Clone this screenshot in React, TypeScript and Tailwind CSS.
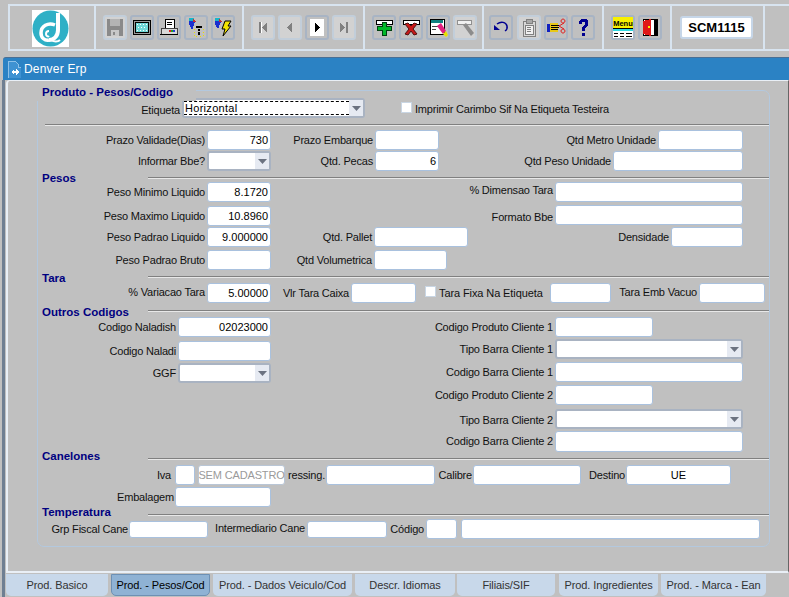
import React from "react";

const FONT = "font-['Liberation_Sans',Arial,sans-serif]";

function Box({ className = "", value, right = true }: { className?: string; value?: string; right?: boolean }) {
  return (
    <div
      className={`flex items-center shrink-0 bg-white border border-[#a9c1de] rounded-[3px] pl-[2px] pr-[2px] text-black ${right ? "justify-end" : "justify-center"} ${className}`}
    >
      {value}
    </div>
  );
}

function SelectBox({ className = "", value }: { className?: string; value?: string }) {
  return (
    <div className={`flex shrink-0 bg-white border-2 border-[#a9b3c2] rounded-[3px] overflow-hidden ${className}`}>
      <span className="flex-1 flex items-center text-black">
        {value && (
          <span className="flex items-center w-full h-[14px] pl-[1px] border-y border-dashed border-black tracking-[0.3px]">{value}</span>
        )}
      </span>
      <span className="flex items-center justify-center w-[14px] bg-[#e6eaf2]">
        <svg width="9" height="5" viewBox="0 0 9 5">
          <path d="M0 0h9L4.5 5z" fill="#6b7280" />
        </svg>
      </span>
    </div>
  );
}

function Label({ className = "", children }: { className?: string; children: React.ReactNode }) {
  return (
    <span className={`flex items-center justify-end shrink-0 pr-[2px] whitespace-nowrap text-[#111] tracking-[-0.2px] ${className}`}>
      {children}
    </span>
  );
}

function Section({ title, className, headClass, lineClass }: { title: string; className: string; headClass: string; lineClass: string }) {
  return (
    <div className={`flex ${className}`}>
      <span className={`w-[110px] shrink-0 pl-[4px] font-bold text-[11.5px] leading-[14px] text-[#000080] whitespace-nowrap ${headClass}`}>
        {title}
      </span>
      <Rule className={`flex-1 ${lineClass}`} />
    </div>
  );
}

function Rule({ className = "" }: { className?: string }) {
  return <div className={`h-[2px] border-t border-[#808080] bg-[#e8e8e8] ${className}`} />;
}

function ToolBtn({ off, children }: { off?: boolean; children: React.ReactNode }) {
  return (
    <div
      className={`flex items-center justify-center w-[24px] h-[25px] rounded-[3px] border-2 ${off ? "border-[#c2ceda] bg-[#d2d2d2]" : "border-[#a8b4c4]"}`}
    >
      <svg width="20" height="21" viewBox="0 0 20 21" shapeRendering="crispEdges">
        {children}
      </svg>
    </div>
  );
}

function Group({ className, children }: { className: string; children?: React.ReactNode }) {
  return <div className={`flex shrink-0 gap-[3px] pt-[9px] border-r-2 border-[#d8e4f0] ${className}`}>{children}</div>;
}

const tabs = [
  { name: "Prod. Basico", cls: "w-[102px] ml-0 bg-[#c8d8ea]" },
  { name: "Prod. - Pesos/Cod", cls: "w-[99px] ml-[3px] bg-[#8fb2d4] border border-[#6d90b4] !text-black" },
  { name: "Prod. - Dados Veiculo/Cod", cls: "w-[139px] ml-[3px] bg-[#c8d8ea]" },
  { name: "Descr. Idiomas", cls: "w-[100px] ml-[3px] bg-[#c8d8ea]" },
  { name: "Filiais/SIF", cls: "w-[98px] ml-[2px] bg-[#c8d8ea]" },
  { name: "Prod. Ingredientes", cls: "w-[99px] ml-[4px] bg-[#c8d8ea]" },
  { name: "Prod. - Marca - Ean", cls: "w-[105px] ml-[3px] bg-[#c8d8ea]" },
];

export default function App() {
  return (
    <div className={`relative flex flex-col w-[789px] h-[597px] overflow-hidden bg-[#c0c0c0] text-[11px] ${FONT}`}>
      {/* toolbar */}
      <div className="flex h-[47px] mt-[4px] ml-[8px] shrink-0 border-2 border-r-0 border-[#d8e4f0]">
        <Group className="w-[86px] pl-[22px] !pt-[4px]">
          <svg width="37" height="37" viewBox="0 0 37 37">
            <rect width="37" height="37" fill="#fff" />
            <circle cx="18.5" cy="18.5" r="18" fill="#2fb0c6" />
            <path d="M26 3v17c0 6-4 10-9 10" fill="none" stroke="#fff" strokeWidth="4" />
            <path d="M23 15c-7-3-14 1-14 8 0 5 4 8 8 7" fill="none" stroke="#fff" strokeWidth="3.5" />
            <path d="M17 21c-2 0-3 1-3 3s2 3 3 2" fill="none" stroke="#fff" strokeWidth="2" />
            <path d="M19 30c3 2 7 2 9 0" fill="none" stroke="#fff" strokeWidth="2" />
          </svg>
        </Group>
        <Group className="w-[148px] pl-[7px]">
          <ToolBtn off>
            <path d="M2 2h16v17H2z" fill="#8a8a8a" />
            <path d="M5 2h10v7H5z" fill="#b4b4b4" />
            <path d="M6 13h8v6H6z" fill="#c8c8c8" />
            <path d="M8 15h2v3H8z" fill="#8a8a8a" />
          </ToolBtn>
          <ToolBtn>
            <path d="M1 3h18v15H1z" fill="#000" />
            <path d="M2 4h16v13H2z" fill="#999" />
            <path d="M3 5h14v11H3z" fill="#000" />
            <path d="M4 6h12v9H4z" fill="#6fd6d6" />
            <path d="M5 7h1v1H5zM8 7h1v1H8zM11 7h1v1h-1zM14 7h1v1h-1zM6 10h1v1H6zM9 10h1v1H9zM12 10h1v1h-1zM5 13h1v1H5zM8 13h1v1H8zM11 13h1v1h-1zM14 13h1v1h-1z" fill="#fff" />
          </ToolBtn>
          <ToolBtn>
            <path d="M6 2h9v9H6z" fill="#fff" stroke="#000" strokeWidth="1" />
            <path d="M8 5h5v1H8zM8 7h5v1H8z" fill="#000" />
            <path d="M2 11h16v6H2z" fill="#d8d8d8" stroke="#444" strokeWidth="1" />
            <path d="M10 13h2v2h-2z" fill="#e02020" />
            <path d="M12 13h2v2h-2z" fill="#20a020" />
            <path d="M14 13h2v2h-2z" fill="#2040e0" />
            <path d="M1 17h18v1H1z" fill="#000" />
          </ToolBtn>
          <ToolBtn>
            <path d="M3 3l6 2-3 8-3-6z" fill="#1a2fd0" />
            <path d="M3 1h5v3H3z" fill="#19b4c8" />
            <path d="M7 2l3 3H7z" fill="#c03030" />
            <path d="M10 9h6v2h-2v3h-2v-2h2v-1h-4zM12 15h2v3h-2z" fill="#000" />
            <path d="M8 12h1v1H8zM8 15h1v1H8zM8 18h1v1H8zM17 12h1v1h-1zM17 15h1v1h-1zM17 18h1v1h-1zM10 19h1v1h-1zM14 19h1v1h-1z" fill="#e8e000" />
          </ToolBtn>
          <ToolBtn>
            <path d="M2 3l6 2-3 7-3-5z" fill="#1a2fd0" />
            <path d="M2 1h5v3H2z" fill="#19b4c8" />
            <path d="M6 2l3 3H6z" fill="#c03030" />
            <path d="M12 4h6l-3 5h3l-8 10 2-7H9z" fill="#f4e400" stroke="#000" strokeWidth="1" shapeRendering="auto" />
          </ToolBtn>
        </Group>
        <Group className="w-[121px] pl-[7px]">
          <ToolBtn off>
            <path d="M6 5h2v11H6z" fill="#808080" />
            <path d="M14 5v11l-5-5.500z" fill="#808080" />
            <path d="M8 5h1v11H8z" fill="#fff" />
          </ToolBtn>
          <ToolBtn off>
            <path d="M12 5v11l-5-5.500z" fill="#808080" />
          </ToolBtn>
          <ToolBtn>
            <path d="M3 2h14v17H3z" fill="#fff" />
            <path d="M8 5v11l5-5.500z" fill="#000" />
          </ToolBtn>
          <ToolBtn off>
            <path d="M6 5v11l5-5.500z" fill="#808080" />
            <path d="M12 5h2v11h-2z" fill="#808080" />
          </ToolBtn>
        </Group>
        <Group className="w-[119px] pl-[7px]">
          <ToolBtn>
            <path d="M2 3h16v4H2z" fill="#fff" stroke="#000" strokeWidth="1" />
            <path d="M8 5h4v4h5v4h-5v5H8v-5H3V9h5z" fill="#00b828" stroke="#004010" strokeWidth="1" />
          </ToolBtn>
          <ToolBtn>
            <path d="M2 3h16v4H2z" fill="#fff" stroke="#000" strokeWidth="1" />
            <path d="M4 7l3-1 3 3 3-3 3 1-4 5 4 5-3 1-3-4-3 4-3-1 4-5z" fill="#c81818" stroke="#501010" strokeWidth="1" shapeRendering="auto" />
          </ToolBtn>
          <ToolBtn>
            <path d="M2 2h14v15H2z" fill="#fff" stroke="#000" strokeWidth="1" />
            <path d="M3 3h12v3H3z" fill="#108080" />
            <path d="M4 9h6v1H4zM4 12h4v1H4z" fill="#444" />
            <path d="M9 9l4-3 5 8-3 3z" fill="#e02080" shapeRendering="auto" />
            <path d="M15 17l3-3 2 4-2 2z" fill="#e8e000" shapeRendering="auto" />
          </ToolBtn>
          <ToolBtn off>
            <path d="M2 3h14v4H2z" fill="#f0f0f0" stroke="#909090" strokeWidth="1" />
            <path d="M8 8l3-2 8 10-3 3z" fill="#8c8c8c" shapeRendering="auto" />
          </ToolBtn>
        </Group>
        <Group className="w-[120px] pl-[5px]">
          <ToolBtn>
            <path d="M6 7c4-3 9-2 10 2 .5 2-.5 4-2 5" fill="none" stroke="#000090" strokeWidth="1.500" shapeRendering="auto" />
            <path d="M3 8l6 5H3z" fill="#000090" shapeRendering="auto" />
          </ToolBtn>
          <div className="ml-[1px]">
            <ToolBtn off>
              <path d="M4 4h12v15H4z" fill="#d8d8d8" stroke="#808080" strokeWidth="1" />
              <path d="M7 2h6v4H7z" fill="#a8a8a8" stroke="#808080" strokeWidth="1" />
              <path d="M6 8h8v9H6z" fill="#f0f0f0" stroke="#808080" strokeWidth="1" />
              <path d="M8 10h4v1H8zM8 12h4v1H8zM8 14h4v1H8z" fill="#808080" />
            </ToolBtn>
          </div>
          <ToolBtn>
            <path d="M1 7h3v8H1z" fill="#1020c0" />
            <path d="M4 6h8v9H4z" fill="#e8c818" />
            <path d="M5 8h8v1H5zM5 10h8v1H5zM5 12h7v1H5z" fill="#000" />
            <path d="M15 4a2 2 0 1 1 0 .1zM15 14a2 2 0 1 1 0 .1z" fill="none" stroke="#e02020" strokeWidth="1" shapeRendering="auto" />
            <path d="M13 9l5-3M13 9l5 3" stroke="#e02020" strokeWidth="1" shapeRendering="auto" />
          </ToolBtn>
          <ToolBtn>
            <path d="M6 7V4l2-2h5l2 2v5l-3 2v3H9v-4l3-2V5H9v2z" fill="#000090" />
            <path d="M9 16h3v3H9z" fill="#000090" />
          </ToolBtn>
        </Group>
        <Group className="w-[68px] pl-[7px]">
          <ToolBtn>
            <path d="M0 0h20v11H0z" fill="#f8f000" />
            <text x="10" y="8.500" textAnchor="middle" fontSize="7.500" fontWeight="700" fill="#000" style={{ fontFamily: "Liberation Sans" }}>
              Menu
            </text>
            <path d="M0 11h20v3H0z" fill="#30d8e0" />
            <path d="M0 14h20v7H0z" fill="#fff" />
            <path d="M0 11h20v1H0zM1 16h4v1H1zM7 16h4v1H7zM13 16h6v1h-6zM1 19h4v1H1zM7 19h4v1H7zM13 19h6v1h-6z" fill="#000" />
          </ToolBtn>
          <ToolBtn>
            <path d="M3 2h15v17H3z" fill="#000" />
            <path d="M4 3h10v15H4z" fill="#fff" />
            <path d="M3 4l8-2v17l-8-2z" fill="#e01818" />
            <path d="M8 9h2v2H8z" fill="#f8f000" />
          </ToolBtn>
        </Group>
        <Group className="w-[93px] pl-[8px] !pt-[10px]">
          <div className="flex items-center justify-center w-[73px] h-[23px] bg-white border-2 border-[#c6d6e8] rounded-[3px] font-bold text-[13px] text-black">
            SCM1115
          </div>
        </Group>
      </div>

      {/* window title */}
      <div className="flex items-center h-[23px] mt-[6px] ml-[3px] pl-[5px] shrink-0 bg-[#2b82c4] border-t border-[#4a6f94] rounded-tl-[3px] text-white text-[12px]">
        <svg width="13" height="17" viewBox="0 0 13 17" shapeRendering="crispEdges">
          <path d="M0 0h7l3 3v3h3v11H0z" fill="#3f92d2" stroke="#8cc0e8" strokeWidth="1" />
          <path d="M6 8L3 11l3 3zM8 8l3 3-3 3z" fill="#fff" />
          <path d="M6 10h2v2H6z" fill="#fff" />
        </svg>
        <span className="ml-[3px] tracking-[0.2px]">Denver Erp</span>
      </div>

      {/* form area */}
      <div className="flex flex-col flex-1 ml-[2px] pl-[1px] border-l-[3px] border-[#6f7f92]">
        <div className="flex flex-col h-[493px] shrink-0 pl-[29px] pt-[9px] bg-[#c0c0c0] border-2 border-r border-t border-[#e9eff6] border-r-[#666] rounded-tl-[4px]">
          <div className="relative w-[733px] h-[457px] flex flex-col shrink-0 border border-[#b3c8de] rounded-[7px]">
            <span className="absolute left-[-1px] top-[-1px] w-[159px] h-[11px] bg-[#c0c0c0]" />
            <span className="absolute left-[4px] top-[-6px] font-bold text-[11.5px] leading-[14px] text-[#000080] whitespace-nowrap">
              Produto - Pesos/Codigo
            </span>

            {/* etiqueta */}
            <div className="flex items-start h-[26px] mt-[7px]">
              <Label className="w-[144px] h-[25px]">Etiqueta</Label>
              <SelectBox className="w-[183px] h-[20px]" value="Horizontal" />
              <span className="w-[11px] h-[11px] ml-[36px] mt-[4px] bg-white border border-[#c9d6e4]" />
              <span className="ml-[3px] mt-[4px] leading-[14px] text-[#111] whitespace-nowrap tracking-[-0.2px]">
                Imprimir Carimbo Sif Na Etiqueta Testeira
              </span>
            </div>
            <Rule className="ml-[7px] mb-[4px]" />

            <div className="flex h-[21px]">
              <Label className="w-[169px] h-[20px]">Prazo Validade(Dias)</Label>
              <Box className="w-[64px] h-[20px]" value="730" />
              <Label className="w-[104px] h-[20px]">Prazo Embarque</Label>
              <Box className="w-[64px] h-[20px]" />
              <Label className="w-[219px] h-[20px]">Qtd Metro Unidade</Label>
              <Box className="w-[85px] h-[20px]" />
            </div>
            <div className="flex h-[20px]">
              <Label className="w-[169px] h-[20px]">Informar Bbe?</Label>
              <SelectBox className="w-[64px] h-[20px]" />
              <Label className="w-[104px] h-[20px]">Qtd. Pecas</Label>
              <Box className="w-[64px] h-[20px]" value="6" />
              <Label className="w-[174px] h-[20px]">Qtd Peso Unidade</Label>
              <Box className="w-[130px] h-[20px]" />
            </div>

            <Section title="Pesos" className="h-[11px]" headClass="mt-0" lineClass="mt-[6px]" />
            <div className="flex h-[23px]">
              <Label className="w-[169px] h-[20px]">Peso Minimo Liquido</Label>
              <Box className="w-[64px] h-[20px]" value="8.1720" />
              <Label className="w-[284px] h-[16px]">% Dimensao Tara</Label>
              <Box className="w-[188px] h-[20px]" />
            </div>
            <div className="flex h-[22px]">
              <Label className="w-[169px] h-[20px] mt-[1px]">Peso Maximo Liquido</Label>
              <Box className="w-[64px] h-[20px] mt-[1px]" value="10.8960" />
              <Label className="w-[284px] h-[24px]">Formato Bbe</Label>
              <Box className="w-[188px] h-[20px]" />
            </div>
            <div className="flex h-[23px]">
              <Label className="w-[169px] h-[20px]">Peso Padrao Liquido</Label>
              <Box className="w-[64px] h-[20px]" value="9.000000" />
              <Label className="w-[103px] h-[20px]">Qtd. Pallet</Label>
              <Box className="w-[94px] h-[20px]" />
              <Label className="w-[203px] h-[20px]">Densidade</Label>
              <Box className="w-[72px] h-[20px]" />
            </div>
            <div className="flex h-[20px]">
              <Label className="w-[169px] h-[20px]">Peso Padrao Bruto</Label>
              <Box className="w-[64px] h-[20px]" />
              <Label className="w-[103px] h-[20px]">Qtd Volumetrica</Label>
              <Box className="w-[73px] h-[20px]" />
            </div>

            <Section title="Tara" className="h-[13px]" headClass="mt-[1px]" lineClass="mt-[6px]" />
            <div className="flex h-[20px]">
              <Label className="w-[169px] h-[18px]">% Variacao Tara</Label>
              <Box className="w-[64px] h-[20px]" value="5.00000" />
              <Label className="w-[80px] h-[20px]">Vlr Tara Caixa</Label>
              <Box className="w-[65px] h-[20px]" />
              <span className="w-[11px] h-[11px] ml-[9px] mt-[3px] bg-white border border-[#c9d6e4]" />
              <span className="w-[111px] ml-[3px] leading-[20px] text-[#111] whitespace-nowrap tracking-[-0.1px]">Tara Fixa Na Etiqueta</span>
              <Box className="w-[61px] h-[20px]" />
              <Label className="w-[88px] h-[18px]">Tara Emb Vacuo</Label>
              <Box className="w-[66px] h-[20px]" />
            </div>

            <Section title="Outros Codigos" className="h-[14px]" headClass="mt-[2px]" lineClass="mt-[7px]" />
            <div className="flex h-[22px]">
              <Label className="w-[140px] h-[20px]">Codigo Naladish</Label>
              <Box className="w-[93px] h-[20px]" value="02023000" />
              <Label className="w-[284px] h-[20px]">Codigo Produto Cliente 1</Label>
              <Box className="w-[98px] h-[20px]" />
            </div>
            <div className="flex h-[23px]">
              <Label className="w-[140px] h-[20px] mt-[2px]">Codigo Naladi</Label>
              <Box className="w-[93px] h-[20px] mt-[2px]" />
              <Label className="w-[284px] h-[20px]">Tipo Barra Cliente 1</Label>
              <SelectBox className="w-[188px] h-[20px]" />
            </div>
            <div className="flex h-[23px]">
              <Label className="w-[140px] h-[20px] mt-[1px]">GGF</Label>
              <SelectBox className="w-[93px] h-[20px] mt-[1px]" />
              <Label className="w-[284px] h-[20px]">Codigo Barra Cliente 1</Label>
              <Box className="w-[188px] h-[20px]" />
            </div>
            <div className="flex h-[24px]">
              <Label className="w-[517px] h-[20px]">Codigo Produto Cliente 2</Label>
              <Box className="w-[98px] h-[20px]" />
            </div>
            <div className="flex h-[22px]">
              <Label className="w-[517px] h-[22px]">Tipo Barra Cliente 2</Label>
              <SelectBox className="w-[188px] h-[20px]" />
            </div>
            <div className="flex h-[21px]">
              <Label className="w-[517px] h-[21px]">Codigo Barra Cliente 2</Label>
              <Box className="w-[188px] h-[21px]" />
            </div>

            <Section title="Canelones" className="h-[13px]" headClass="-mt-[3px]" lineClass="mt-[6px]" />
            <div className="flex h-[22px]">
              <Label className="w-[137px] h-[20px] !pr-[4px]">Iva</Label>
              <Box className="w-[20px] h-[20px] mr-[3px]" />
              <div className="flex items-center justify-center w-[87px] h-[20px] shrink-0 bg-white border border-[#b9c6d6] rounded-[3px] text-[#9a9a9a] whitespace-nowrap tracking-[-0.15px]">
                SEM CADASTRO
              </div>
              <Label className="w-[41px] h-[20px] !pr-[1px]">ressing.</Label>
              <Box className="w-[109px] h-[20px]" />
              <Label className="w-[38px] h-[20px] !pr-[1px]">Calibre</Label>
              <Box className="w-[108px] h-[20px]" />
              <Label className="w-[45px] h-[20px] !pr-[1px]">Destino</Label>
              <Box className="w-[105px] h-[20px]" value="UE" right={false} />
            </div>
            <div className="flex h-[20px]">
              <Label className="w-[137px] h-[20px] !pr-[1px]">Embalagem</Label>
              <Box className="w-[96px] h-[20px]" />
            </div>

            <Section title="Temperatura" className="h-[12px]" headClass="-mt-[2px]" lineClass="mt-[7px]" />
            <div className="flex h-[20px]">
              <Label className="w-[91px] h-[17px] mt-[2px] !pr-[1px]">Grp Fiscal Cane</Label>
              <Box className="w-[79px] h-[17px] mt-[2px]" />
              <Label className="w-[99px] h-[17px] mt-[1px]">Intermediario Cane</Label>
              <Box className="w-[80px] h-[17px] mt-[2px]" />
              <Label className="w-[39px] h-[20px]">Código</Label>
              <Box className="w-[31px] h-[20px]" />
              <Box className="w-[299px] h-[20px] ml-[4px]" />
            </div>
          </div>
        </div>

        {/* tabs */}
        <div className="flex mt-[1px]">
          {tabs.map((t) => (
            <div
              key={t.name}
              className={`flex items-center justify-center h-[22px] rounded-b-[5px] text-[#333] whitespace-nowrap tracking-[-0.1px] ${t.cls}`}
            >
              {t.name}
            </div>
          ))}
        </div>
      </div>
    </div>
  );
}
